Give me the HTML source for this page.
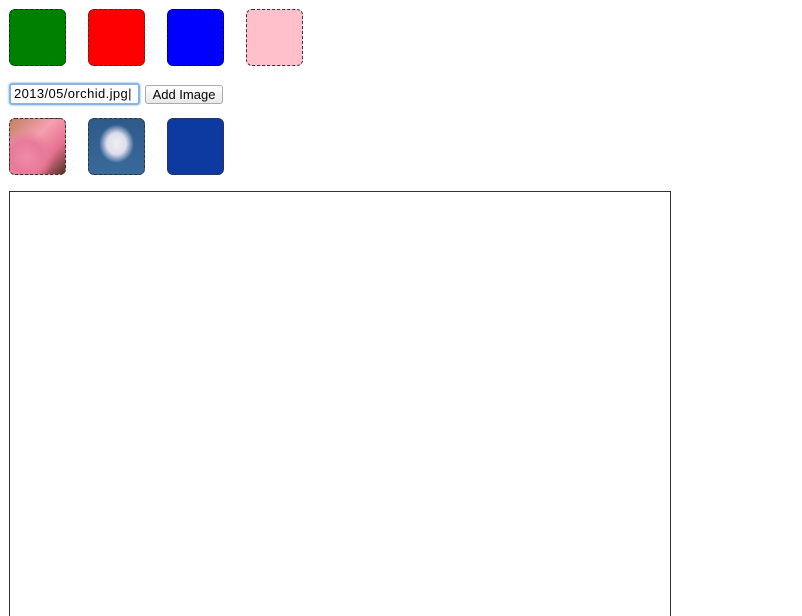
<!DOCTYPE html>
<html><head><style>
html,body{margin:0;background:#fff;width:802px;height:616px;overflow:hidden}
body{position:relative;font-family:"Liberation Sans",sans-serif}
.b{position:absolute;width:55px;height:55px;border:1px dashed #333;border-radius:6px;box-sizing:content-box}
</style></head><body>
<div class="b" style="left:9px;top:9px;background:#008000;border-color:#030"></div>
<div class="b" style="left:88px;top:9px;background:#f00"></div>
<div class="b" style="left:167px;top:9px;background:#00f;border-color:#003"></div>
<div class="b" style="left:246px;top:9px;background:#ffc0cb"></div>
<div style="position:absolute;left:9px;top:83px;width:124px;height:18px;border:2px solid #8ab4e3;border-radius:3px;box-shadow:0 0 2px #6aa0dd;font-size:13px;line-height:18px;padding-left:3px;box-sizing:content-box;color:#000;letter-spacing:0.4px">2013/05/orchid.jpg|</div>
<div style="position:absolute;left:145px;top:85px;width:76px;height:17px;border:1px solid #aaa;border-radius:3px;background:linear-gradient(#fff,#e8e8e8);font-size:13px;line-height:17px;text-align:center">Add Image</div>
<div class="b" style="left:9px;top:118px;background:radial-gradient(circle at 30% 70%,#f08aa8 0,#e87a9a 30%,transparent 50%),linear-gradient(135deg,#c08060 0,#f5a0b0 40%,#e57090 70%,#503020 100%)"></div>
<div class="b" style="left:88px;top:118px;background:radial-gradient(ellipse at 50% 45%,#f0f0f0 0,#dde 25%,transparent 45%),linear-gradient(#2d5a8a,#3a6a9a)"></div>
<div class="b" style="left:167px;top:118px;background:#0c3aa0"></div>
<div style="position:absolute;left:9px;top:191px;width:660px;height:424px;border:1px solid #333;border-bottom:none"></div>
</body></html>
